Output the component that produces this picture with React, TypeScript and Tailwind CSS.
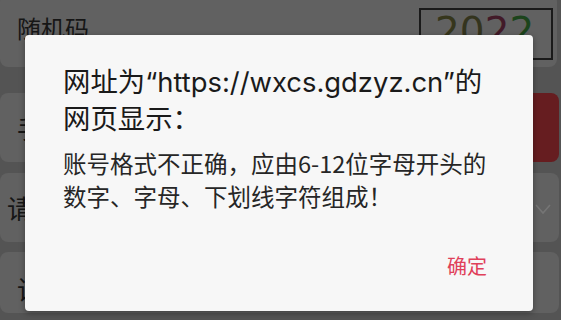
import React from "react";

const cjk = { fontFamily: '"Noto Sans CJK SC", sans-serif' };
const mixed = { fontFamily: 'Inter, "Noto Sans CJK SC", sans-serif' };

export default function App() {
  return (
    <div className="relative w-[561px] h-[320px] overflow-hidden bg-[#545454]" style={cjk}>
      {/* dimmed page behind the dialog */}
      <div className="flex flex-col">
        <div className="mt-[-6px] h-[73px] mr-[4px] flex items-center justify-between rounded-[8px] bg-[#616161] pl-[17px] pr-[4px]">
          <span className="text-[24px] text-[#161616] mt-[-6px]">随机码</span>
          <div className="mt-[6px] w-[134px] h-[52px] border-2 border-[#1a1a1a] flex items-start justify-start pt-[2px] pl-[14px]">
            <span className="text-[39px] leading-none" style={{ fontFamily: '"DejaVu Sans", sans-serif' }}>
              <span className="text-[#36361c]">2</span>
              <span className="text-[#34341e]">0</span>
              <span className="text-[#421a28]">2</span>
              <span className="text-[#1c441c]">2</span>
            </span>
          </div>
        </div>
        <div className="mt-[26px] h-[69px] mr-[2px] flex gap-[8px]">
          <div className="flex-1 flex items-center rounded-[8px] bg-[#616161] pl-[17px]">
            <span className="text-[26px] text-[#161616]">手机号码</span>
          </div>
          <div className="w-[110px] rounded-[8px] bg-[#661d20] flex items-center justify-center">
            <span className="text-[22px] text-[#777]">获取</span>
          </div>
        </div>
        <div className="mt-[11px] h-[69px] mr-[2px] flex items-center justify-between rounded-[8px] bg-[#616161] pl-[7px] pr-[8px]">
          <span className="text-[26px] text-[#161616]">请选择学校</span>
          <svg width="16" height="12" viewBox="0 0 16 12" className="mt-[2px]">
            <path d="M1 2 L8 10 L15 2" fill="none" stroke="#757575" strokeWidth="1.6" />
          </svg>
        </div>
        <div className="mt-[10px] h-[61px] mr-[2px] flex items-center rounded-[8px] bg-[#616161] pl-[17px]">
          <span className="text-[26px] text-[#161616] mt-[12px]">请输入密码</span>
        </div>
      </div>

      {/* alert dialog */}
      <div className="absolute left-[25px] top-[35px] w-[508px] h-[276px] rounded-[4px] bg-[#f7f7f7] shadow-[0_2px_6px_rgba(0,0,0,0.35)] flex flex-col pt-[29px] px-[38px]">
        <div className="text-[27.4px] leading-[37px] text-[#1a1a1a] whitespace-nowrap" style={mixed}>
          <div>网址为“https://wxcs.gdzyz.cn”的</div>
          <div>网页显示：</div>
        </div>
        <div className="mt-[9px] text-[23.5px] leading-[33px] text-[#262626] whitespace-nowrap" style={cjk}>
          <div>账号格式不正确，应由6-12位字母开头的</div>
          <div>数字、字母、下划线字符组成！</div>
        </div>
        <div className="mt-auto flex justify-end pr-[8px] pb-[31px]">
          <span className="text-[20px] leading-[28px] text-[#e0405a]">确定</span>
        </div>
      </div>
    </div>
  );
}
